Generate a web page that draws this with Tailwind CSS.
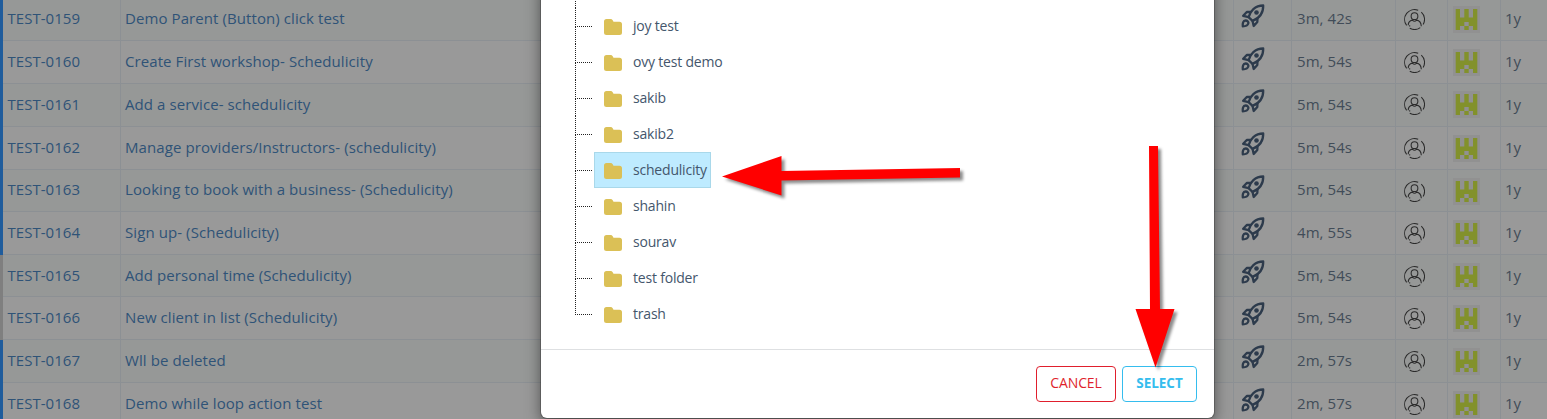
<!DOCTYPE html>
<html lang="en">
<head>
<meta charset="utf-8">
<title>Tests</title>
<script src="https://cdn.jsdelivr.net/npm/@tailwindcss/browser@4"></script>
</head>
<body class="relative h-[419px] w-[1547px] overflow-hidden bg-[#999999] font-['Open_Sans',sans-serif]">
<svg class="hidden">
  <symbol id="rocket" viewBox="0 0 24 24">
    <g fill="none" stroke="#2d3b4c" stroke-width="2.300" stroke-linejoin="round" stroke-linecap="round">
      <path d="M7.600 13.200C9 7 14 1.500 22.200 1.500C22.400 9 18.500 14.200 11.500 16.800Z"/>
      <path d="M9.500 8L5.800 8L2.200 11.800L7.600 13.200M16.500 14.300L16.300 17.900L12.700 22L11.500 16.800"/>
      <path d="M1.800 22.300C1.500 19.500 2 16.500 4.500 16.500C6.500 16.500 7.800 18 7.300 19.500C6.700 21.300 4.500 22.300 1.800 22.300Z"/>
    </g>
    <circle cx="15.500" cy="8.500" r="2.300" fill="#2d3b4c"/>
  </symbol>
  <symbol id="user" viewBox="0 0 20 20">
    <g fill="none" stroke="#2b2b2b" stroke-width="1">
      <path d="M13.500 1.200A9.400 9.400 0 0 0 2.500 15.600M16.500 3A9.400 9.400 0 0 1 18.200 14.800M15.500 17.700A9.400 9.400 0 0 1 5.500 18.300"/>
      <circle cx="10" cy="6.800" r="3.200"/>
      <path d="M4 15.500C4 12.500 6 11 8 10.600Q10 12.800 12 10.600C14.500 11 16.300 13 16.500 16.500"/>
      <path d="M5.400 15.500v1.200"/>
    </g>
  </symbol>
  <symbol id="avatar" viewBox="0 0 27 27">
    <path fill="#919191" d="M0 0h27v27H0z"/>
    <path fill="#82912b" d="M2.700 3h4.300v8.500h4.300V3h4.400v8.500H20V3h4.300v21H20v-4h-4.300v-4h-4.400v4H7v4H2.700zM11.300 20h4.400v4h-4.400z"/>
  </symbol>
  <symbol id="folder" viewBox="0 0 18 16">
    <path fill="#dbc056" d="M0 2.500Q0 0 2.500 0H6.500Q8 0 8.700 1.300L9.500 2.800H15.500Q18 2.800 18 5.300V13.500Q18 16 15.500 16H2.500Q0 16 0 13.500Z"/>
  </symbol>
</svg>

<main id="rows" class="-mt-[2px] flex flex-col"></main>

<section class="absolute top-[-20px] left-[541px] flex h-[438px] w-[673px] flex-col rounded-[6px] bg-white shadow-[0_0_0_1px_rgba(0,0,0,0.2),0_5px_15px_rgba(0,0,0,0.5)]">
  <div class="h-[370px] border-b border-[#dee0e2] pl-[34px]">
    <div class="h-7 border-l border-dotted border-[#222222]"></div>
    <ul id="tree" class="flex flex-col"></ul>
  </div>
  <footer class="flex flex-1 justify-end gap-[6px] pt-[16px] pr-[17px]">
    <button class="flex h-[36px] w-[80px] items-center justify-center rounded-[4px] border border-[#e01f2d] pb-[4px] text-[14px] font-medium tracking-[-0.1px] text-[#e01f2d]">CANCEL</button>
    <button class="flex h-[36px] w-[75px] items-center justify-center rounded-[4px] border border-[#35bdee] pb-[2px] text-[13.5px] font-bold tracking-[-0.05px] text-[#35bdee]">SELECT</button>
  </footer>
</section>

<svg class="absolute inset-0 h-[419px] w-[1547px] drop-shadow-[3px_3px_1.5px_rgba(0,0,0,0.45)]" viewBox="0 0 1547 419">
  <path fill="#ff0000" d="M722 176.500L781.500 156V171L960 168V177.500L781.500 180.500V195.500Z"/>
  <path fill="#ff0000" d="M1149 146H1158L1160 309H1174.500L1155.500 367.500L1135.500 309H1150Z"/>
</svg>

<script>
  const rows = [
    ['0159', 'Demo Parent (Button) click test', '3m, 42s'],
    ['0160', 'Create First workshop- Schedulicity', '5m, 54s'],
    ['0161', 'Add a service- schedulicity', '5m, 54s'],
    ['0162', 'Manage providers/Instructors- (schedulicity)', '5m, 54s'],
    ['0163', 'Looking to book with a business- (Schedulicity)', '5m, 54s'],
    ['0164', 'Sign up- (Schedulicity)', '4m, 55s'],
    ['0165', 'Add personal time (Schedulicity)', '5m, 54s'],
    ['0166', 'New client in list (Schedulicity)', '5m, 54s'],
    ['0167', 'Wll be deleted', '2m, 57s'],
    ['0168', 'Demo while loop action test', '2m, 57s'],
  ];
  document.getElementById('rows').innerHTML = rows.map(([id, name, time], i) => `
    <div class="flex shrink-0 ${i === 4 || i === 6 ? 'h-[42px]' : 'h-[43px]'} ${i % 2 ? 'bg-[#999999]' : 'bg-[#969897]'} ${i === 4 ? 'leading-[38px]' : 'leading-[40px]'} text-[15px] whitespace-nowrap text-[#2f5377]">
      <div class="w-[3px] ${i === 6 || i === 7 ? 'bg-[#7f7f7f]' : 'bg-[#1f5c9c]'}"></div>
      <div class="w-[118px] border-r border-b border-[#8c9094] pl-[4.5px] tracking-[0.04px]">TEST-${id}</div>
      <div class="w-[1113px] border-r border-b border-[#8c9094] pl-[4px] tracking-[0.085px]">${name}</div>
      <div class="w-[58px] border-r border-b border-[#8c9094] pl-[7px] ${i < 2 ? 'pt-[6px]' : 'pt-[5px]'}"><svg class="h-[24px] w-[24px]"><use href="#rocket"/></svg></div>
      <div class="w-[104px] border-r border-b border-[#8c9094] pl-[5px] tracking-[0.08px] text-[#414c58]">${time}</div>
      <div class="w-[52px] border-r border-b border-[#8c9094] pl-[8px] ${i === 2 ? 'pt-[10px]' : 'pt-[11px]'}"><svg class="h-[21px] w-[21px]"><use href="#user"/></svg></div>
      <div class="w-[53px] border-r border-b border-[#8c9094] pl-[5px] ${i === 2 ? 'pt-[7px]' : 'pt-[8px]'}"><svg class="h-[27px] w-[27px]"><use href="#avatar"/></svg></div>
      <div class="flex-1 border-b border-[#8c9094] pl-[4px] text-[#414c58]">1y</div>
    </div>`).join('');

  const folders = ['joy test', 'ovy test demo', 'sakib', 'sakib2', 'schedulicity', 'shahin', 'sourav', 'test folder', 'trash'];
  document.getElementById('tree').innerHTML = folders.map((name, i) => `
    <li class="flex h-[36px]">
      <div class="flex w-[17px] flex-col">
        <div class="h-[19px] border-b border-l border-dotted border-[#222222]"></div>
        <div class="flex-1 ${i < 8 ? 'border-l border-dotted border-[#222222]' : ''}"></div>
      </div>
      <div class="ml-[2px] flex h-[36px] items-center border pr-[3px] pl-[9px] ${i === 4 ? 'border-[#a9d8ea] bg-[#beebff]' : 'border-transparent'}">
        <svg class="mt-[2px] h-[16px] w-[18px]"><use href="#folder"/></svg>
        <span class="ml-[11px] pb-[1px] text-[14px] tracking-[-0.2px] whitespace-nowrap text-[#44566c]">${name}</span>
      </div>
    </li>`).join('');
</script>
</body>
</html>
